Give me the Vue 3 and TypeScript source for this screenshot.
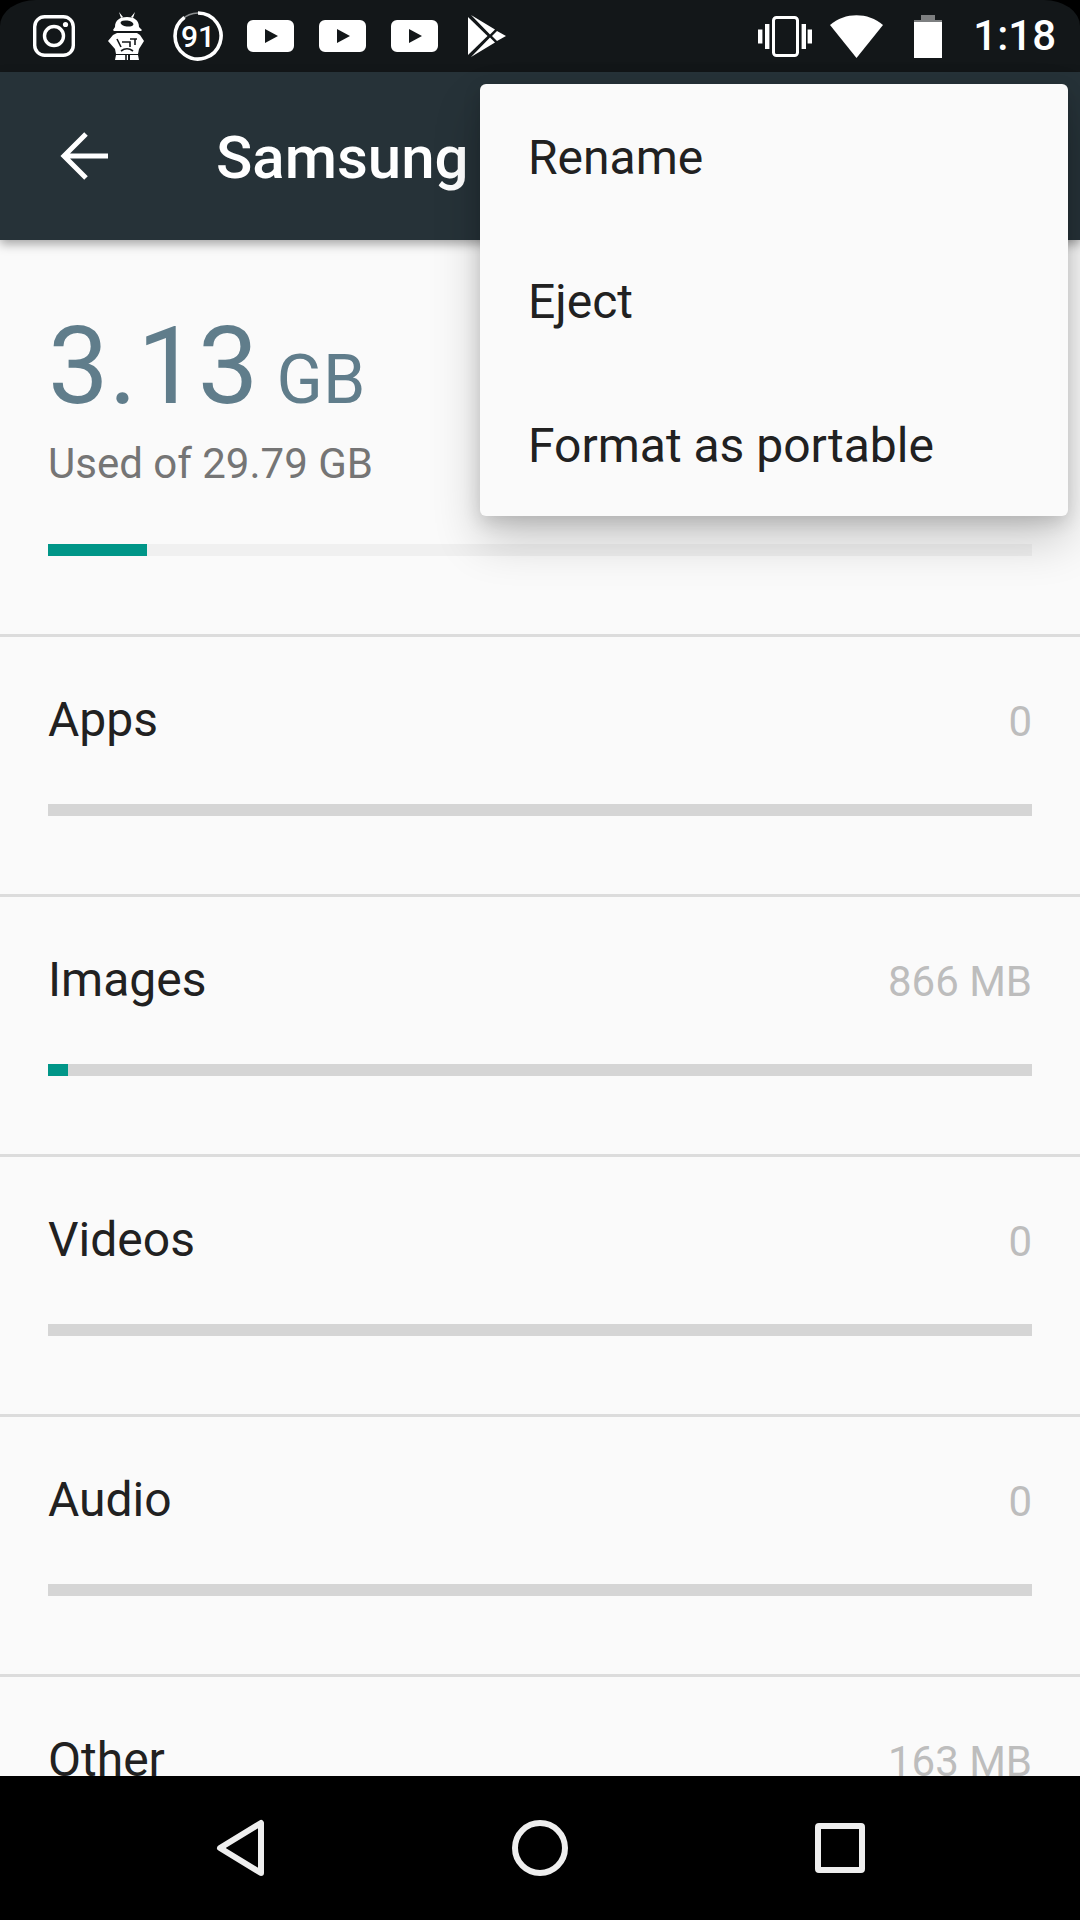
<template>
  <div class="phone">
    <div class="status-bar">
      <div class="status-bar__left">
        <svg class="ic-insta" width="42" height="42" viewBox="0 0 42 42" fill="none" stroke="#fff">
          <rect x="1.7" y="1.7" width="38.6" height="38.6" rx="10" stroke-width="3.4" />
          <circle cx="21" cy="21" r="9.5" stroke-width="3.4" />
          <circle cx="32.5" cy="9.5" r="2.6" fill="#fff" stroke="none" />
        </svg>
        <svg class="ic-robot" width="36" height="48" viewBox="0 0 36 48" fill="#fff">
          <path d="M11 0l4 5-2 1zM27 0l-4 5 2 1z" />
          <path d="M7 15C7 8 12 5 19 5s12 3 12 10l3 3-1 1H6l-1-1z" />
          <path d="M9 21h20l3 2 4 6-5 8-1 5H8l-1-5-7-8 5-6z" />
          <path d="M7 48l1-5h12v5zM22 48v-5h8l1 5z" />
          <ellipse cx="19" cy="11.5" rx="6.5" ry="3" fill="#131719" transform="rotate(8 19 11.5)" />
          <path d="M9 27l4 8M14 30h8v5M22 27h7M27 27v6M13 39c4-3 8-3 12 0M18 43v5" stroke="#131719" stroke-width="1.6" fill="none" />
        </svg>
        <svg class="ic-score" width="50" height="50" viewBox="0 0 50 50" fill="none">
          <circle cx="25" cy="25" r="23" stroke="#8a8d8e" stroke-width="1.5" />
          <path d="M25 2A23 23 0 1 1 11.5 6.4" stroke="#fff" stroke-width="3.6" />
          <text x="25" y="35.5" class="ic-score__num" text-anchor="middle">91</text>
        </svg>
        <svg v-for="n in 3" :key="n" class="ic-yt" width="47" height="32" viewBox="0 0 47 32">
          <path fill="#fff" fill-rule="evenodd" d="M6 0h35a6 6 0 0 1 6 6v20a6 6 0 0 1-6 6H6a6 6 0 0 1-6-6V6a6 6 0 0 1 6-6zM18 9v14l13-7z" />
        </svg>
        <svg class="ic-play" width="38" height="42" viewBox="0 0 38 42" fill="#fff">
          <path d="M0 2v38l19.5-19z" />
          <path d="M3 0l24 14.5-5 5zM3 42l24-14.5-5-5z" />
          <path d="M24 21l5-5 9 5-9 5z" />
        </svg>
      </div>
      <div class="status-bar__right">
        <svg class="ic-vib" width="54" height="41" viewBox="0 0 54 41" fill="none" stroke="#fff">
          <rect x="15.5" y="1.5" width="24" height="38" rx="3" stroke-width="3" />
          <path d="M2.2 13.5v14M9.2 8v25M45.8 8v25M51.8 13.5v14" stroke-width="4.4" />
        </svg>
        <svg class="ic-wifi" width="53" height="43" viewBox="0 0 53 43" fill="#fff">
          <path d="M26.5 43L0 10C15-3 38-3 53 10z" />
        </svg>
        <div class="ic-batt">
          <div class="ic-batt__nub"></div>
          <div class="ic-batt__body"></div>
        </div>
        <span class="status-bar__time">1:18</span>
      </div>
    </div>

    <header class="app-bar">
      <svg class="app-bar__back" width="48" height="48" viewBox="0 0 48 48" fill="none" stroke="#fff" stroke-width="5">
        <path d="M48 24H4M26 2L4 24l22 22" />
      </svg>
      <span class="app-bar__title">Samsung</span>
    </header>

    <main class="content">
      <section class="summary">
        <div class="summary__size">
          <span class="summary__num">3.13</span>
          <span class="summary__unit">GB</span>
        </div>
        <div class="summary__of">Used of 29.79 GB</div>
        <div class="bar bar--light">
          <div class="bar__fill" style="width: 99px"></div>
        </div>
      </section>
      <section v-for="row in rows" :key="row.name" class="row">
        <div class="row__head">
          <span class="row__name">{{ row.name }}</span>
          <span class="row__value">{{ row.value }}</span>
        </div>
        <div class="bar">
          <div class="bar__fill" :style="{ width: row.fill + 'px' }"></div>
        </div>
      </section>
    </main>

    <nav class="nav-bar">
      <svg width="50" height="58" viewBox="0 0 50 58" fill="none" stroke="#eee" stroke-width="6" stroke-linejoin="round" class="nav-bar__back">
        <path d="M45 4v50L4 29z" />
      </svg>
      <svg width="56" height="56" viewBox="0 0 56 56" fill="none" stroke="#eee" stroke-width="6" class="nav-bar__home">
        <circle cx="28" cy="28" r="25" />
      </svg>
      <svg width="50" height="50" viewBox="0 0 50 50" fill="none" stroke="#eee" stroke-width="6" stroke-linejoin="round" class="nav-bar__recent">
        <rect x="3" y="3" width="44" height="44" rx="1" />
      </svg>
    </nav>

    <div class="menu">
      <div v-for="item in menuItems" :key="item" class="menu__item">{{ item }}</div>
    </div>
  </div>
</template>

<script setup lang="ts">
const rows = [
  { name: 'Apps', value: '0', fill: 0 },
  { name: 'Images', value: '866 MB', fill: 20 },
  { name: 'Videos', value: '0', fill: 0 },
  { name: 'Audio', value: '0', fill: 0 },
  { name: 'Other', value: '163 MB', fill: 4 },
];

const menuItems = ['Rename', 'Eject', 'Format as portable'];
</script>

<style>
html,
body {
  margin: 0;
  background: #000;
}
</style>

<style scoped>
.phone {
  position: relative;
  width: 1080px;
  height: 1920px;
  display: flex;
  flex-direction: column;
  overflow: hidden;
  background: #000;
  font-family: Roboto, sans-serif;
}

.status-bar {
  height: 72px;
  flex-shrink: 0;
  display: flex;
  align-items: center;
  justify-content: space-between;
  background: #131719;
  border-radius: 36px 36px 0 0 / 26px 26px 0 0;
  padding: 0 24px 0 33px;
}
.status-bar__left,
.status-bar__right {
  display: flex;
  align-items: center;
}
.ic-robot { margin-left: 33px; }
.ic-score { margin-left: 29px; }
.ic-yt { margin-left: 25px; }
.ic-score + .ic-yt { margin-left: 24px; }
.ic-play { margin-left: 30px; }
.ic-score__num {
  font-family: Roboto, sans-serif;
  font-size: 30px;
  font-weight: 500;
  fill: #fff;
}
.ic-wifi { margin-left: 18px; }
.ic-batt {
  margin-left: 31px;
  width: 28px;
  height: 43px;
  display: flex;
  flex-direction: column;
  align-items: center;
}
.ic-batt__nub {
  width: 14px;
  height: 5px;
  background: #7d7f80;
}
.ic-batt__body {
  flex: 1;
  width: 100%;
  background: linear-gradient(#7d7f80 0 2px, #fff 2px);
}
.status-bar__time {
  margin-left: 31px;
  font-size: 42px;
  font-weight: 500;
  color: #fff;
  line-height: 1;
}

.app-bar {
  position: relative;
  z-index: 1;
  height: 168px;
  flex-shrink: 0;
  display: flex;
  align-items: center;
  background: #263238;
  box-shadow: 0 4px 10px rgba(0, 0, 0, 0.35);
  padding-left: 60px;
}
.app-bar__title {
  margin-left: 108px;
  margin-top: 2px;
  font-size: 60px;
  font-weight: 500;
  color: #fff;
}

.content {
  flex: 1;
  min-height: 0;
  overflow: hidden;
  background: #fafafa;
}
.summary {
  height: 394px;
  box-sizing: border-box;
  padding: 64px 48px 0;
}
.summary__size {
  display: flex;
  align-items: baseline;
  gap: 18px;
  color: #607d8b;
  height: 124px;
}
.summary__num {
  font-size: 108px;
  line-height: 124px;
}
.summary__unit {
  font-size: 68px;
}
.summary__of {
  margin-top: 8px;
  font-size: 42px;
  line-height: 56px;
  color: #757575;
}
.bar {
  height: 12px;
  background: #d5d5d5;
}
.bar__fill {
  height: 100%;
  background: #009688;
}
.bar--light {
  margin-top: 52px;
  background: #f0f0f0;
}
.row {
  height: 260px;
  box-sizing: border-box;
  border-top: 3px solid #dcdcdc;
  padding: 0 48px;
}
.row__head {
  height: 165px;
  margin-bottom: 2px;
  display: flex;
  justify-content: space-between;
  align-items: center;
}
.row__name {
  font-size: 48px;
  color: #212121;
}
.row__value {
  margin-top: 4px;
  font-size: 42px;
  color: #bdbdbd;
}

.nav-bar {
  position: relative;
  height: 144px;
  flex-shrink: 0;
  display: flex;
  align-items: center;
  background: #000;
}
.nav-bar__back { margin-left: 216px; }
.nav-bar__home { margin-left: 246px; }
.nav-bar__recent { margin-left: 247px; }

.menu {
  position: absolute;
  z-index: 2;
  top: 84px;
  left: 480px;
  width: 588px;
  background: #fafafa;
  border-radius: 6px;
  box-shadow: 0 24px 48px rgba(0, 0, 0, 0.2), 0 6px 18px rgba(0, 0, 0, 0.14);
}
.menu__item {
  box-sizing: border-box;
  height: 144px;
  display: flex;
  align-items: center;
  padding: 2px 0 0 48px;
  font-size: 48px;
  color: #212121;
}
</style>
